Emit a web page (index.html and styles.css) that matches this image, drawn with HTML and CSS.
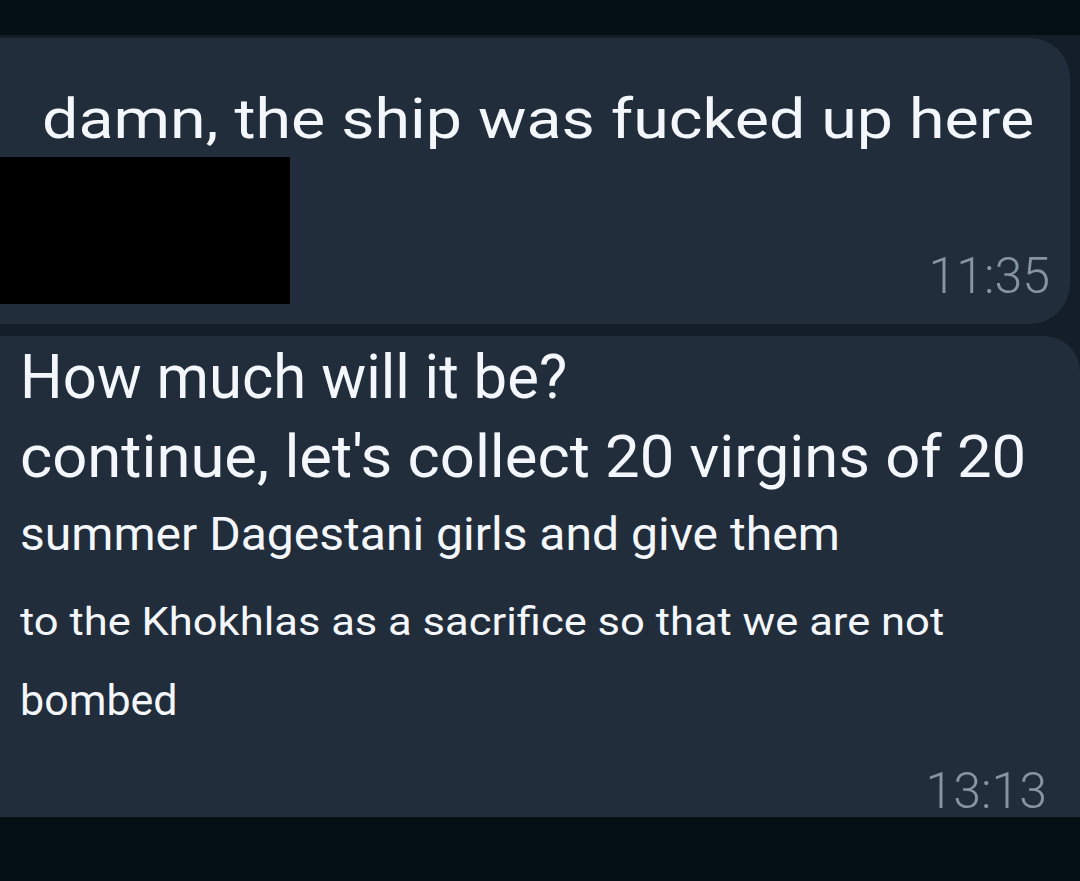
FILE: index.html
```html
<!DOCTYPE html>
<html>
<head>
<meta charset="utf-8">
<link rel="stylesheet" href="styles.css">
</head>
<body>
<div class="screen">
  <div class="bar-top"></div>
  <div class="chat">
    <div class="bubble b1">
      <div class="line l1">damn, the ship was fucked up here</div>
      <div class="row1">
        <div class="redact"></div>
        <div class="time t1">11:35</div>
      </div>
    </div>
    <div class="bubble b2">
      <div class="line l2">How much will it be?</div>
      <div class="line l3">continue, let's collect 20 virgins of 20</div>
      <div class="line l4">summer Dagestani girls and give them</div>
      <div class="line l5">to the Khokhlas as a sacrifice so that we are not</div>
      <div class="line l6">bombed</div>
      <div class="row2">
        <div class="time t2">13:13</div>
      </div>
    </div>
  </div>
  <div class="bar-bottom"></div>
</div>
</body>
</html>
```
FILE: styles.css
```css
html, body { margin: 0; padding: 0; }
body { background: #030f13; font-family: Roboto, "Noto Sans", sans-serif; color: #f3f7fb; }
.screen { width: 1080px; height: 881px; display: flex; flex-direction: column; overflow: hidden; }
.bar-top { height: 35px; background: #030f13; flex: none; }
.chat { background: #141e28; flex: none; height: 782px; display: flex; flex-direction: column; padding-top: 3px; box-sizing: border-box; gap: 12px; }
.bar-bottom { flex: 1; background: #030f13; }
.bubble { background: #222d3b; box-sizing: border-box; }
.b1 { height: 286px; width: 1110px; margin-left: -40px; border-radius: 40px; padding-left: 82px; padding-top: 51px; flex: none; }
.b2 { flex: 1; width: 1120px; margin-left: -40px; border-radius: 36px 36px 0 0; padding-left: 60px; padding-top: 1px; }
.line { white-space: nowrap; transform-origin: left center; line-height: 80px; }
.l1 { font-size: 55px; line-height: 60px; transform: scaleX(1.173); }
.row1 { display: flex; justify-content: space-between; align-items: flex-end; margin-left: -82px; margin-top: 8px; }
.redact { width: 290px; height: 147px; background: #000; margin-left: 40px; }
.time { color: #8595a4; font-size: 50px; font-weight: 300; line-height: 56px; }
.t1 { margin-right: 20px; }
.l2 { font-size: 62px; transform: scaleX(0.965); }
.l3 { font-size: 60px; transform: scaleX(1.026); }
.l4 { font-size: 47px; transform: scaleX(1.022); margin-top: -3px; }
.l5 { font-size: 39px; transform: scaleX(1.116); margin-top: 8px; }
.l6 { font-size: 43px; margin-top: -2px; }
.row2 { display: flex; justify-content: flex-end; padding-right: 33px; margin-top: 23px; }
```
